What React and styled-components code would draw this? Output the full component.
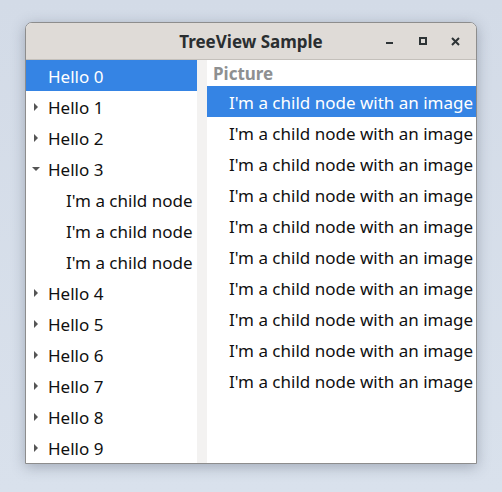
import React from "react";
import styled, { createGlobalStyle } from "styled-components";

const Global = createGlobalStyle`
  html, body { margin: 0; padding: 0; }
  body {
    width: 502px; height: 492px; overflow: hidden;
    background: linear-gradient(180deg, #d3dbe7 0%, #d9e1ec 100%);
    font-family: "Noto Sans", "Open Sans", sans-serif;
  }
  #root { padding: 22px 0 0 25px; }
`;

const Window = styled.div`
  width: 450px;
  border: 1px solid #8d8d8d;
  border-radius: 7px 7px 0 0;
  overflow: hidden;
  background: #fff;
  box-shadow: 0 3px 14px rgba(60, 70, 90, 0.35);
  display: flex;
  flex-direction: column;
`;

const TitleBar = styled.div`
  height: 36px;
  border-bottom: 1px solid #c4c0bb;
  background: #dfdbd7;
  position: relative;
  display: flex;
  align-items: center;
  justify-content: center;
`;

const Title = styled.div`
  font-weight: 700;
  font-size: 17px;
  color: #2a2e30;
  padding-top: 1px;
`;

const Controls = styled.div`
  position: absolute;
  right: 4px;
  top: 0;
  height: 100%;
  display: flex;
  align-items: center;
`;

const CtlBtn = styled.div`
  width: 33px;
  height: 30px;
  display: flex;
  align-items: center;
  justify-content: center;
`;

const Body = styled.div`
  display: flex;
  height: 403px;
`;

const LeftPane = styled.div`
  width: 171px;
  display: flex;
  flex-direction: column;
`;

const Splitter = styled.div`
  width: 10px;
  background: #f3f2f1;
`;

const RightPane = styled.div`
  flex: 1;
  display: flex;
  flex-direction: column;
`;

const Row = styled.div`
  height: 31px;
  flex-shrink: 0;
  display: flex;
  align-items: center;
  font-size: 17px;
  white-space: nowrap;
  overflow: hidden;
  padding-top: 1px;
  box-sizing: border-box;
  color: ${(p) => (p.$sel ? "#ffffff" : "#101010")};
  background: ${(p) => (p.$sel ? "#3584e4" : "transparent")};
  padding-left: ${(p) => p.$indent}px;
`;

const Arrow = styled.span`
  width: 15px;
  display: flex;
  align-items: center;
  justify-content: flex-start;
`;

const Header = styled.div`
  height: 26px;
  flex-shrink: 0;
  display: flex;
  align-items: center;
  padding-left: 6px;
  font-size: 17px;
  font-weight: 700;
  color: #8e9091;
`;

const Tri = ({ open }) =>
  open ? (
    <svg width="10" height="6" viewBox="0 0 10 6" style={{ marginLeft: -2 }}>
      <path d="M1 1h8L5 5z" fill="#555" />
    </svg>
  ) : (
    <svg width="6" height="10" viewBox="0 0 6 10">
      <path d="M1 1v8l4-4z" fill="#555" />
    </svg>
  );

export default function App() {
  const rows = [];
  for (let i = 0; i < 10; i++) {
    if (i === 0) {
      rows.push(
        <Row key="h0" $sel $indent={7}>
          <Arrow />Hello 0
        </Row>
      );
      continue;
    }
    rows.push(
      <Row key={"h" + i} $indent={7}>
        <Arrow>
          <Tri open={i === 3} />
        </Arrow>
        Hello {i}
      </Row>
    );
    if (i === 3) {
      for (let c = 0; c < 3; c++)
        rows.push(
          <Row key={"c" + c} $indent={40}>
            I'm a child node
          </Row>
        );
    }
  }
  const right = [];
  for (let k = 0; k < 10; k++)
    right.push(
      <Row key={k} $sel={k === 0} $indent={22}>
        I'm a child node with an image
      </Row>
    );
  return (
    <>
      <Global />
      <Window>
        <TitleBar>
          <Title>TreeView Sample</Title>
          <Controls>
            <CtlBtn>
              <svg width="8" height="8" viewBox="0 0 8 8">
                <rect x="0" y="5" width="7" height="2" fill="#2e3436" />
              </svg>
            </CtlBtn>
            <CtlBtn>
              <svg width="8" height="8" viewBox="0 0 8 8">
                <rect x="1" y="1" width="6" height="6" fill="none" stroke="#2e3436" strokeWidth="2" />
              </svg>
            </CtlBtn>
            <CtlBtn>
              <svg width="9" height="9" viewBox="0 0 9 9">
                <path d="M1 1l7 7M8 1l-7 7" stroke="#2e3436" strokeWidth="2" />
              </svg>
            </CtlBtn>
          </Controls>
        </TitleBar>
        <Body>
          <LeftPane>{rows}</LeftPane>
          <Splitter />
          <RightPane>
            <Header>Picture</Header>
            {right}
          </RightPane>
        </Body>
      </Window>
    </>
  );
}
